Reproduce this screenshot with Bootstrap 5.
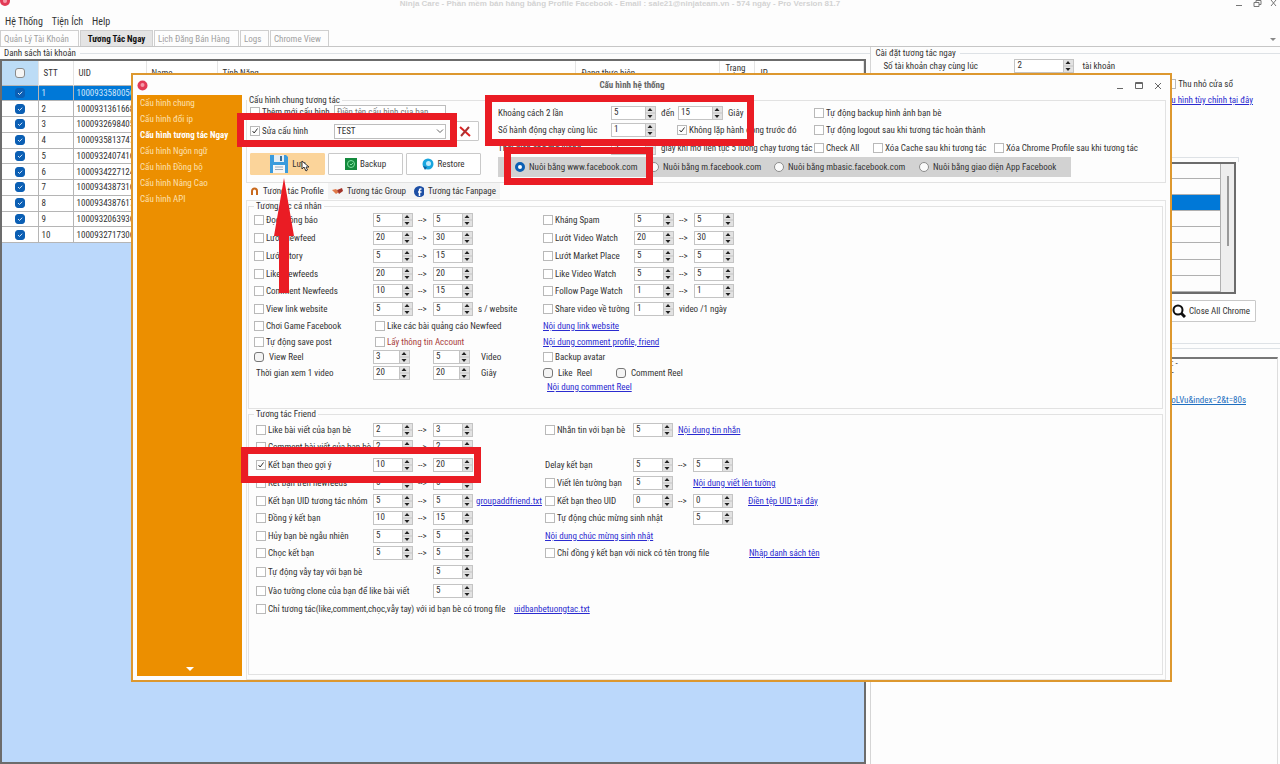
<!DOCTYPE html>
<html lang="vi">
<head>
<meta charset="utf-8">
<meta name="viewport" content="width=device-width, initial-scale=1">
<title>Ninja Care</title>
<link href="https://cdn.jsdelivr.net/npm/bootstrap@5.3.0/dist/css/bootstrap.min.css" rel="stylesheet">
<style>
body{font-family:"Roboto Condensed",Roboto,"Liberation Sans",sans-serif;font-size:9px;line-height:14px;color:#333;background:#fdfdfd;min-height:100vh;position:relative;overflow-x:hidden}
a{color:#2b2bd0}
/* main window */
.win-title{height:14px;font:bold 8px/8px "Liberation Sans",sans-serif;color:#d3d3d3;padding-right:40px}
.win-tools{position:absolute;right:0;top:0}
.win-logo{position:absolute;left:0;top:0}
.menu-row{height:16px;font-size:10px;padding-left:5px;gap:9px}
.menu-row a{color:#333;text-decoration:none}
.main-tabs{height:17px;border-bottom:1px solid #c6c6c6;gap:1px}
.main-tabs .nav-link{padding:0 3px;height:16px;line-height:16px;color:#a0a0a0;border:1px solid #cfcfcf;border-bottom:0;border-radius:0;background:#fdfdfd;text-align:left}
.main-tabs .nav-link.active{color:#111;font-weight:bold;background:#e4e4e4;text-align:center}
.tab-a{width:79px}.tab-b{width:73px}.tab-c{width:85px}.tab-d{width:29px}.tab-e{width:59px}
.pane-l{flex:1 1 0;min-width:0}
.pane-r{flex:0 0 32%;border-left:1px solid #d5d5d5}
.box-cap{height:12px}
.acc-box{border:2px solid #6c6c6c;background:#bbd8fb;overflow:hidden}
.acc{width:100%;height:182px;table-layout:fixed;background:#fff;border-collapse:collapse}
.acc th{font-weight:normal;height:24px;border-right:1px solid #e4e4e4;padding:0 5px;vertical-align:middle;line-height:10px}
.acc td{border:1px solid #b5b5b5;border-left:0;padding:0 3px;line-height:10px;white-space:nowrap;overflow:hidden}
.acc .pick{text-align:center;padding:0}
.acc th.pick{background:#bcdcf6}
.acc tr.on td{background:#0078d7;color:#cfe6fb}
.w-pick{width:36px}.w-stt{width:35px}.w-uid{width:73px}.w-name{width:71px}.w-act{width:144px}.w-ip{width:109px}
.blue-ck{appearance:none;width:10px;height:10px;border:1px solid #8a8a8a;border-radius:3px;background:#f5f5f5;margin:0;display:block;margin-inline:auto}
.blue-ck:checked{border-color:#0b5fb4;background:#0b5fb4 url("data:image/svg+xml,%3Csvg xmlns='http://www.w3.org/2000/svg' viewBox='0 0 8 8'%3E%3Cpath d='M2 4l1.5 1.5L6.200 2.700' fill='none' stroke='%23d8e8fa'/%3E%3C/svg%3E")}
/* group boxes */
fieldset{border:1px solid #e2e2e2}
legend{float:none;width:auto;margin:0;padding:0 2px;font-size:9px;line-height:10px}
/* controls */
.tick{display:inline-flex;align-items:center;gap:2px;white-space:nowrap}
.tick input[type=checkbox]{appearance:none;flex:none;width:10px;height:10px;border:1px solid #b9b9b9;background:#fff;margin:0}
.tick input[type=checkbox]:checked{background:url("data:image/svg+xml,%3Csvg xmlns='http://www.w3.org/2000/svg' viewBox='0 0 8 8'%3E%3Cpath d='M1.500 4l1.700 2L6.500 1.500' fill='none' stroke='%23333'/%3E%3C/svg%3E")}
.tick.round{gap:5px}
.tick.round input[type=checkbox]{border-color:#777;border-radius:3px;background:#f4f4f4}
.tick input[type=radio]{appearance:none;flex:none;width:10px;height:10px;border:1px solid #8c8c8c;border-radius:50%;background:#fafafa;margin:0}
.tick input[type=radio]:checked{border:3px solid #0b5fb4;background:#fff}
.spin{appearance:textfield;width:40px;height:14px;flex:none;border:1px solid #c4c4c4;border-radius:0;padding:0 12px 2px 2px;font-size:9px;line-height:10px;color:#333;
background:#fff url("data:image/svg+xml,%3Csvg xmlns='http://www.w3.org/2000/svg' width='10' height='12'%3E%3Cpath fill='%23e2e2e2' d='M0 0h10v12H0z'/%3E%3Cpath d='M0 6h10M.5 0v12' stroke='%23c4c4c4'/%3E%3Cpath fill='%23222' d='M5 1L7.500 4H2.500zM5 11L7.500 8H2.500z'/%3E%3C/svg%3E") right center no-repeat}
.spin::-webkit-inner-spin-button{appearance:none}
.spin.mid{width:45px}.spin.wide{width:60px}.spin.slim{width:37px}
.num{display:flex;align-items:center;gap:5px;white-space:nowrap}
/* settings dialog */
.dlg{position:absolute;left:131px;right:108px;top:73px;border:2px solid #dd982f;background:#fdfdfd}
.dlg-title{height:20px;font-weight:bold;color:#666;font-size:9px}
.dlg-side{width:105px;margin-left:4px;background:#ec8f00;padding:0 3px;margin-bottom:4px}
.dlg-side a{color:#fde0b0;text-decoration:none;height:16px;line-height:16px;white-space:nowrap}
.dlg-side a.active{color:#fff;font-weight:bold}
.dlg-body{margin-left:4px;margin-right:4px}
.cfg{padding:0 0 5px 3px}
.cfg-l{width:248px;flex:none}
.cfg-l .tick{width:84px}
.cfg-box{width:112px;height:15px;border:1px solid #bdbdbd;border-radius:0;padding:0 2px;font-size:9px;line-height:11px;background:#fff;color:#333}
select.cfg-box{appearance:none;background:#fff url("data:image/svg+xml,%3Csvg xmlns='http://www.w3.org/2000/svg' width='10' height='6'%3E%3Cpath d='M2 1.500l3 3 3-3' fill='none' stroke='%23666'/%3E%3C/svg%3E") right center no-repeat}
.btn-win{--bs-btn-padding-x:0;--bs-btn-padding-y:0;--bs-btn-font-size:9px;--bs-btn-border-radius:1px;--bs-btn-line-height:14px;--bs-btn-bg:#fff;--bs-btn-color:#333;--bs-btn-border-color:#c9c9c9;display:flex;align-items:center;justify-content:center;height:22px;width:75px;gap:3px}
.btn-del{width:29px;height:20px}
.btn-close-all{width:90px}
.btn-save{--bs-btn-bg:#fbd49a;--bs-btn-border-color:#fbd49a;position:relative}
.hand{position:absolute;left:50px;top:6px}
.run-row{display:grid;grid-template-columns:113px 203px 1fr;align-items:center}
.w-all{width:59px}.w-cache{width:121px}.w-reel{width:73px}
.modes{background:#d2d2d2;height:20px;padding-left:17px;margin-right:94px}
.modes .tick{gap:4px}
.m1{width:134px}.m2{width:125px}.m3{width:145px}
.act-tabs{height:17px}
.act-tabs .nav-link{display:flex;align-items:center;gap:4px;padding:0 4px;border:0;width:82px;color:#333;background:#f4f4f4;border-radius:0;height:16px;white-space:nowrap}
.act-tabs .nav-link.active{background:#fdfdfd;color:#333}
.act-tabs .nav-link:last-child{width:90px}
.act-pane{border:1px solid #e4e4e4;padding:0 2px 4px 1px}
.act-pane fieldset{padding-left:5px}
.acts{display:grid;align-items:center}
.acts>*{min-width:0;white-space:nowrap}
.acts-self{grid-template-columns:119px 60px 110px 91px 60px 1fr;grid-template-rows:18px 18px 18px 17px 18px 17px 17px 15px 15px 17px 12px;padding-bottom:15px}
.acts-friend{grid-template-columns:117px 60px 112px 88px 60px 1fr;grid-template-rows:17px 18px 18px 18px 17px 18px 17px 18px 20px 18px 18px;padding:2px 0 56px 2px}
.acts-friend .c3 a{margin-left:-2px}
.acts a{justify-self:start}
.c1{grid-column:1}.c2{grid-column:2}.c3{grid-column:3}.c4{grid-column:4}.c5{grid-column:5}.c6{grid-column:6}
.nudge{padding-left:2px}
.file-link{grid-column:3/5;padding-left:81px}
.name-link{padding-left:56px}
.danger{color:#a8403c}
/* right pane */
.cnt-lab{width:131px}
.r-small{padding-right:47px}
.r-link{padding-right:27px}
.r-edge{margin-top:50px;margin-right:41px}
.grid-box{height:132px;border:2px solid #6c6c6c;margin-right:44px;overflow:hidden}
.grid-lines{border-collapse:collapse;width:100%}
.grid-lines td{height:16px;padding:0;border-bottom:1px solid #b0b0b0;border-right:1px solid #b0b0b0}
.grid-lines tr:first-child td{height:14px}
.grid-lines tr.on td{background:#0078d7}
.scroll-col{width:13px;background:#eee}
.scroll-col span{width:2px;height:70px;margin:12px 0 0 6px;background:#999}
.r-actions{padding:6px 24px 21px 0}
.r-split{height:6px}
.log-box{border-top:2px solid #777;border-right:1px solid #ddd;margin-right:2px}
.log-lines{padding-left:300px;line-height:9px}
.log-link{padding:16px 31px 0 0}
.log-link a{color:#1f6fc0}
/* annotations drawn over the windows */
.note{position:absolute;border:7px solid #ea1c24;pointer-events:none}
.note-edit{left:237px;top:113px;width:220px;height:34px}
.note-run{left:485px;top:95px;width:269px;height:51px}
.note-mode{left:504px;top:147px;width:149px;height:38px}
.note-friend{left:241px;top:447px;width:240px;height:36px}
.note-arrow{position:absolute;left:273px;top:178px;pointer-events:none}
</style>
</head>
<body class="d-flex flex-column">
<svg class="win-logo" width="12" height="7" aria-hidden="true"><circle cx="5" cy="1" r="5" fill="#e23a56"/><circle cx="5" cy="1" r="2" fill="#f59aa9"/></svg>
<div class="win-title text-center">Ninja Care - Phần mềm bán hàng bằng Profile Facebook - Email : sale21@ninjateam.vn - 574 ngày - Pro Version 81.7</div>
<svg class="win-tools" width="50" height="10" fill="none" stroke="#777" aria-hidden="true"><path d="M6 5.500h6M24 2.500h5v4h-5zM26 2V.5h5v4h-2M41 0l5 6M46 0l-5 6"/></svg>
<nav class="menu-row d-flex align-items-center"><a href="#">Hệ Thống</a><a href="#">Tiện Ích</a><a href="#">Help</a></nav>
<div class="main-tabs nav d-flex flex-nowrap align-items-end">
  <button class="nav-link tab-a text-nowrap">Quản Lý Tài Khoản</button><button class="nav-link active tab-b text-nowrap">Tương Tác Ngay</button><button class="nav-link tab-c text-nowrap">Lịch Đăng Bán Hàng</button><button class="nav-link tab-d">Logs</button><button class="nav-link tab-e text-nowrap">Chrome View</button>
  <svg class="ms-auto me-1 mb-1" width="6" height="4" aria-hidden="true"><path d="M0 0h6L3 3z" fill="#888"/></svg>
</div>
<main class="d-flex flex-grow-1">
  <section class="pane-l d-flex flex-column">
    <div class="box-cap ps-1 d-flex align-items-center gap-1">Danh sách tài khoản<span class="border-top flex-grow-1"></span></div>
    <div class="acc-box flex-grow-1 me-1">
      <table class="acc">
        <colgroup><col class="w-pick"><col class="w-stt"><col class="w-uid"><col class="w-name"><col><col class="w-act"><col class="w-stt"><col class="w-ip"></colgroup>
        <thead><tr><th class="pick"><input type="checkbox" class="blue-ck" aria-label="Chọn tất cả"></th><th>STT</th><th>UID</th><th>Name</th><th>Tính Năng</th><th>Đang thực hiện</th><th>Trạng thái</th><th>IP</th></tr></thead>
        <tbody>
        <tr class="on"><td class="pick"><input type="checkbox" class="blue-ck" checked aria-label="1"></td><td>1</td><td>100093358005671</td><td></td><td></td><td></td><td></td><td></td></tr>
        <tr><td class="pick"><input type="checkbox" class="blue-ck" checked aria-label="2"></td><td>2</td><td>100093136166812</td><td></td><td></td><td></td><td></td><td></td></tr>
        <tr><td class="pick"><input type="checkbox" class="blue-ck" checked aria-label="3"></td><td>3</td><td>100093269840523</td><td></td><td></td><td></td><td></td><td></td></tr>
        <tr><td class="pick"><input type="checkbox" class="blue-ck" checked aria-label="4"></td><td>4</td><td>100093581374734</td><td></td><td></td><td></td><td></td><td></td></tr>
        <tr><td class="pick"><input type="checkbox" class="blue-ck" checked aria-label="5"></td><td>5</td><td>100093240741645</td><td></td><td></td><td></td><td></td><td></td></tr>
        <tr><td class="pick"><input type="checkbox" class="blue-ck" checked aria-label="6"></td><td>6</td><td>100093422712456</td><td></td><td></td><td></td><td></td><td></td></tr>
        <tr><td class="pick"><input type="checkbox" class="blue-ck" checked aria-label="7"></td><td>7</td><td>100093438731667</td><td></td><td></td><td></td><td></td><td></td></tr>
        <tr><td class="pick"><input type="checkbox" class="blue-ck" checked aria-label="8"></td><td>8</td><td>100093438761778</td><td></td><td></td><td></td><td></td><td></td></tr>
        <tr><td class="pick"><input type="checkbox" class="blue-ck" checked aria-label="9"></td><td>9</td><td>100093206393689</td><td></td><td></td><td></td><td></td><td></td></tr>
        <tr><td class="pick"><input type="checkbox" class="blue-ck" checked aria-label="10"></td><td>10</td><td>100093271730690</td><td></td><td></td><td></td><td></td><td></td></tr>
        </tbody>
      </table>
    </div>
  </section>
  <section class="pane-r d-flex flex-column">
    <div class="box-cap ps-1 d-flex align-items-center gap-1">Cài đặt tương tác ngay<span class="border-top flex-grow-1"></span></div>
    <div class="d-flex align-items-center ps-2">
      <label for="acc-count" class="ms-1 cnt-lab">Số tài khoản chạy cùng lúc</label><input id="acc-count" class="spin wide" type="number" value="2"><span class="ms-2">tài khoản</span></div>
    <div class="text-end mt-1 r-small"><label class="tick"><input type="checkbox"> Thu nhỏ cửa sổ</label></div>
    <div class="text-end r-link"><a href="#">Cấu hình tùy chỉnh tại đây</a></div>
    <div class="border-top border-end pt-1 r-edge"></div>
    <div class="grid-box d-flex">
      <table class="grid-lines"><tbody><tr><td></td></tr><tr><td></td></tr><tr class="on"><td></td></tr><tr><td></td></tr><tr><td></td></tr><tr><td></td></tr><tr><td></td></tr><tr><td></td></tr></tbody></table>
      <div class="scroll-col flex-shrink-0 d-flex"><span></span></div>
    </div>
    <div class="d-flex justify-content-end r-actions"><button class="btn btn-win btn-close-all"><svg width="14" height="14" fill="none" stroke="#111" stroke-width="2" aria-hidden="true"><circle cx="6" cy="6" r="4.500"/><path d="M9 9l4 4" stroke-width="3"/></svg>Close All Chrome</button></div>
    <div class="border-top border-bottom r-split"></div>
    <div class="log-box flex-grow-1 mt-2"><div class="d-flex flex-column log-lines"><span>: -</span><span>-</span></div><div class="text-end log-link"><a href="#">4aoLVu&amp;index=2&amp;t=80s</a></div></div>
  </section>
</main>

<div class="dlg">
  <div class="dlg-title d-flex align-items-center px-1">
    <svg width="11" height="11" aria-hidden="true"><circle cx="5.500" cy="5.500" r="5" fill="#e23a56"/><circle cx="5.500" cy="5" r="2" fill="#f59aa9"/></svg>
    <span class="flex-grow-1 text-center">Cấu hình hệ thống</span>
    <svg width="50" height="11" fill="none" stroke="#666" aria-hidden="true"><path d="M1 8.500h6M19.500 2.500h7v6h-7zM19 3.500h8M39 3l6 6M45 3l-6 6"/></svg>
  </div>
  <div class="d-flex">
    <nav class="dlg-side d-flex flex-column flex-shrink-0"><a href="#">Cấu hình chung</a><a href="#">Cấu hình đổi ip</a><a href="#" class="active">Cấu hình tương tác Ngay</a><a href="#">Cấu hình Ngôn ngữ</a><a href="#">Cấu hình Đồng bộ</a><a href="#">Cấu hình Nâng Cao</a><a href="#">Cấu hình API</a>
      <svg class="mt-auto mx-auto mb-1" width="8" height="6" aria-hidden="true"><path d="M0 1h8L4 5z" fill="#fff"/></svg></nav>
    <div class="dlg-body flex-grow-1">
      <fieldset>
        <legend>Cấu hình chung tương tác</legend>
        <div class="d-flex cfg">
          <div class="cfg-l">
            <div class="d-flex align-items-center" style="height:14px"><label class="tick"><input type="checkbox"> Thêm mới cấu hình</label><input class="cfg-box" type="text" placeholder="Điền tên cấu hình của bạn" aria-label="Tên cấu hình"></div>
            <div class="d-flex align-items-center" style="height:24px"><label class="tick"><input type="checkbox" checked> Sửa cấu hình</label><select class="cfg-box" aria-label="Cấu hình"><option>TEST</option></select><button class="btn btn-win btn-del ms-1" aria-label="Xóa"><svg width="12" height="11" fill="none" aria-hidden="true"><path d="M1 1l10 9" stroke="#d22" stroke-width="2"/><path d="M10 1L2 10" stroke="#a33" stroke-width="2"/></svg></button></div>
            <div class="d-flex" style="margin-top:10px;gap:3px">
              <button class="btn btn-win btn-save"><svg width="20" height="20" aria-hidden="true"><path d="M1 1h16l2 2v16H1z" fill="#3a9bdc"/><path d="M5 1h10v7H5z" fill="#e6eef4"/><path d="M11 2h2v5h-2z" fill="#3a6f99"/><path d="M4 11h12v8H4z" fill="#f7f7f7"/><path d="M6 13h8M6 15.500h8" stroke="#9ab"/></svg>Lưu<svg class="hand" width="9" height="12" aria-hidden="true"><path d="M1 1v8l2-2 2 4 1.500-1L5 7h3z" fill="#fff" stroke="#333"/></svg></button>
              <button class="btn btn-win"><svg width="12" height="12" aria-hidden="true"><path d="M0 0h12v12H0z" fill="#138a3d"/><circle cx="6" cy="6" r="3.500" fill="none" stroke="#7fe0a0"/><path d="M5 6l1 1 2-2" stroke="#7fe0a0" fill="none"/></svg>Backup</button>
              <button class="btn btn-win"><svg width="12" height="12" aria-hidden="true"><circle cx="6" cy="6" r="5.500" fill="#18a5de"/><circle cx="6.500" cy="5.500" r="2.500" fill="#bfeafc"/><path d="M1 8l4 1-2 3z" fill="#0a5f9e"/></svg>Restore</button>
            </div>
          </div>
          <div class="flex-grow-1">
            <div class="run-row" style="height:16px"><label for="gap-a">Khoảng cách 2 lần</label><span class="num"><input id="gap-a" class="spin mid" type="number" value="5"><span style="width:12px">đến</span><input class="spin mid" type="number" value="15" aria-label="đến"><span>Giây</span></span><label class="tick"><input type="checkbox"> Tự động backup hình ảnh bạn bè</label></div>
            <div class="run-row" style="height:18px"><label for="par">Số hành động chạy cùng lúc</label><span class="num"><input id="par" class="spin mid" type="number" value="1"><label class="tick ms-3"><input type="checkbox" checked> Không lặp hành động trước đó</label></span><label class="tick"><input type="checkbox"> Tự động logout sau khi tương tác hoàn thành</label></div>
            <div class="run-row" style="height:18px"><label for="wait">Thời gian chờ mở luồng</label><span class="num"><input id="wait" class="spin mid" type="number" value="5"><span>giây khi mở liên tục 5 luồng chạy tương tác</span></span><span class="d-flex"><label class="tick w-all"><input type="checkbox"> Check All</label><label class="tick w-cache"><input type="checkbox"> Xóa Cache sau khi tương tác</label><label class="tick"><input type="checkbox"> Xóa Chrome Profile sau khi tương tác</label></span></div>
            <div class="modes d-flex align-items-center"><label class="tick m1"><input type="radio" name="mode" checked> Nuôi bằng www.facebook.com</label><label class="tick m2"><input type="radio" name="mode"> Nuôi bằng m.facebook.com</label><label class="tick m3"><input type="radio" name="mode"> Nuôi bằng mbasic.facebook.com</label><label class="tick"><input type="radio" name="mode"> Nuôi bằng giao diện App Facebook</label></div>
          </div>
        </div>
      </fieldset>
      <div class="act-tabs nav flex-nowrap">
        <button class="nav-link active"><svg width="9" height="10" fill="none" aria-hidden="true"><path d="M2 9V5a2.500 2.500 0 0 1 5 0v4" stroke="#c9691c" stroke-width="2"/></svg>Tương tác Profile</button>
        <button class="nav-link"><svg width="11" height="8" aria-hidden="true"><path d="M0 3l4-1 3 3-3 2z" fill="#e07a4a"/><path d="M5 3l5-2 1 3-4 3z" fill="#a3342a"/></svg>Tương tác Group</button>
        <button class="nav-link"><svg width="11" height="11" aria-hidden="true"><circle cx="5.500" cy="5.500" r="5.500" fill="#1d4fa5"/><path d="M7.500 3H6.500q-1 0-1 1v6M4 6h3.500" stroke="#fff" fill="none" stroke-width="1.500"/></svg>Tương tác Fanpage</button>
      </div>
      <div class="act-pane">
        <fieldset>
          <legend>Tương tác cá nhân</legend>
          <div class="acts acts-self">
            <label class="tick c1"><input type="checkbox"> Đọc thông báo</label><span class="num c2"><input class="spin" type="number" value="5" aria-label="Đọc thông báo từ"> --&gt;</span><span class="num c3"><input class="spin" type="number" value="5" aria-label="Đọc thông báo đến"></span>
            <label class="tick c4"><input type="checkbox"> Kháng Spam</label><span class="num c5"><input class="spin" type="number" value="5" aria-label="Kháng Spam từ"> --&gt;</span><span class="num c6"><input class="spin" type="number" value="5" aria-label="Kháng Spam đến"></span>
            <label class="tick c1"><input type="checkbox"> Lướt Newfeed</label><span class="num c2"><input class="spin" type="number" value="20" aria-label="Lướt Newfeed từ"> --&gt;</span><span class="num c3"><input class="spin" type="number" value="30" aria-label="Lướt Newfeed đến"></span>
            <label class="tick c4"><input type="checkbox"> Lướt Video Watch</label><span class="num c5"><input class="spin" type="number" value="20" aria-label="Lướt Video từ"> --&gt;</span><span class="num c6"><input class="spin" type="number" value="30" aria-label="Lướt Video đến"></span>
            <label class="tick c1"><input type="checkbox"> Lướt Story</label><span class="num c2"><input class="spin" type="number" value="5" aria-label="Lướt Story từ"> --&gt;</span><span class="num c3"><input class="spin" type="number" value="15" aria-label="Lướt Story đến"></span>
            <label class="tick c4"><input type="checkbox"> Lướt Market Place</label><span class="num c5"><input class="spin" type="number" value="5" aria-label="Market từ"> --&gt;</span><span class="num c6"><input class="spin" type="number" value="5" aria-label="Market đến"></span>
            <label class="tick c1"><input type="checkbox"> Like Newfeeds</label><span class="num c2"><input class="spin" type="number" value="20" aria-label="Like từ"> --&gt;</span><span class="num c3"><input class="spin" type="number" value="20" aria-label="Like đến"></span>
            <label class="tick c4"><input type="checkbox"> Like Video Watch</label><span class="num c5"><input class="spin" type="number" value="5" aria-label="Like Video từ"> --&gt;</span><span class="num c6"><input class="spin" type="number" value="5" aria-label="Like Video đến"></span>
            <label class="tick c1"><input type="checkbox"> Comment Newfeeds</label><span class="num c2"><input class="spin" type="number" value="10" aria-label="Comment từ"> --&gt;</span><span class="num c3"><input class="spin" type="number" value="15" aria-label="Comment đến"></span>
            <label class="tick c4"><input type="checkbox"> Follow Page Watch</label><span class="num c5"><input class="spin" type="number" value="1" aria-label="Follow từ"> --&gt;</span><span class="num c6"><input class="spin" type="number" value="1" aria-label="Follow đến"></span>
            <label class="tick c1"><input type="checkbox"> View link website</label><span class="num c2"><input class="spin" type="number" value="5" aria-label="View link từ"> --&gt;</span><span class="num c3"><input class="spin" type="number" value="5" aria-label="View link đến"> s / website</span>
            <label class="tick c4"><input type="checkbox"> Share video về tường</label><span class="num c5"><input class="spin" type="number" value="1" aria-label="Share video"> video /1 ngày</span>
            <label class="tick c1"><input type="checkbox"> Chơi Game Facebook</label><label class="tick c2 nudge"><input type="checkbox"> Like các bài quảng cáo Newfeed</label><a class="c4" href="#">Nội dung link website</a>
            <label class="tick c1"><input type="checkbox"> Tự động save post</label><label class="tick c2 nudge danger"><input type="checkbox"> Lấy thông tin Account</label><a class="c4" href="#">Nội dung comment profile, friend</a>
            <label class="tick round c1"><input type="checkbox"> View Reel</label><span class="num c2"><input class="spin slim" type="number" value="3" aria-label="Reel từ"></span><span class="num c3"><input class="spin slim" type="number" value="5" aria-label="Reel đến"><span class="ms-1 nudge">Video</span></span><label class="tick c4"><input type="checkbox"> Backup avatar</label>
            <span class="c1 nudge">Thời gian xem 1 video</span><span class="num c2"><input class="spin slim" type="number" value="20" aria-label="Thời gian từ"></span><span class="num c3"><input class="spin slim" type="number" value="20" aria-label="Thời gian đến"><span class="ms-1 nudge">Giây</span></span><span class="c4 d-flex"><label class="tick round w-reel flex-shrink-0"><input type="checkbox"> Like &nbsp;Reel</label><label class="tick round"><input type="checkbox"> Comment Reel</label></span>
            <a class="c4 ms-1" href="#">Nội dung comment Reel</a>
          </div>
        </fieldset>
        <fieldset>
          <legend>Tương tác Friend</legend>
          <div class="acts acts-friend">
            <label class="tick c1"><input type="checkbox"> Like bài viết của bạn bè</label><span class="num c2"><input class="spin" type="number" value="2" aria-label="Like từ"> --&gt;</span><span class="num c3"><input class="spin" type="number" value="3" aria-label="Like đến"></span><label class="tick c4"><input type="checkbox"> Nhắn tin với bạn bè</label><span class="num c5"><input class="spin" type="number" value="5" aria-label="Nhắn tin"> <a href="#">Nội dung tin nhắn</a></span>
            <label class="tick c1"><input type="checkbox"> Comment bài viết của bạn bè</label><span class="num c2"><input class="spin" type="number" value="2" aria-label="Comment từ"> --&gt;</span><span class="num c3"><input class="spin" type="number" value="2" aria-label="Comment đến"></span>
            <label class="tick c1"><input type="checkbox" checked> Kết bạn theo gợi ý</label><span class="num c2"><input class="spin" type="number" value="10" aria-label="Gợi ý từ"> --&gt;</span><span class="num c3"><input class="spin" type="number" value="20" aria-label="Gợi ý đến"></span><span class="c4">Delay kết bạn</span><span class="num c5"><input class="spin" type="number" value="5" aria-label="Delay từ"> --&gt;</span><span class="num c6"><input class="spin" type="number" value="5" aria-label="Delay đến"></span>
            <label class="tick c1"><input type="checkbox"> Kết bạn trên newfeeds</label><span class="num c2"><input class="spin" type="number" value="5" aria-label="Newfeeds từ"> --&gt;</span><span class="num c3"><input class="spin" type="number" value="5" aria-label="Newfeeds đến"></span><label class="tick c4"><input type="checkbox"> Viết lên tường bạn</label><span class="num c5"><input class="spin" type="number" value="5" aria-label="Viết lên tường"></span><a class="c6" href="#">Nội dung viết lên tường</a>
            <label class="tick c1"><input type="checkbox"> Kết bạn UID tương tác nhóm</label><span class="num c2"><input class="spin" type="number" value="5" aria-label="UID nhóm từ"> --&gt;</span><span class="num c3"><input class="spin" type="number" value="5" aria-label="UID nhóm đến"><a href="#">groupaddfriend.txt</a></span><label class="tick c4"><input type="checkbox"> Kết bạn theo UID</label><span class="num c5"><input class="spin" type="number" value="0" aria-label="UID từ"> --&gt;</span><span class="num c6"><input class="spin" type="number" value="0" aria-label="UID đến"><a class="ms-2 nudge" href="#">Điền tệp UID tại đây</a></span>
            <label class="tick c1"><input type="checkbox"> Đồng ý kết bạn</label><span class="num c2"><input class="spin" type="number" value="10" aria-label="Đồng ý từ"> --&gt;</span><span class="num c3"><input class="spin" type="number" value="15" aria-label="Đồng ý đến"></span><label class="tick c4"><input type="checkbox"> Tự động chúc mừng sinh nhật</label><span class="num c6"><input class="spin" type="number" value="5" aria-label="Sinh nhật"></span>
            <label class="tick c1"><input type="checkbox"> Hủy bạn bè ngẫu nhiên</label><span class="num c2"><input class="spin" type="number" value="5" aria-label="Hủy từ"> --&gt;</span><span class="num c3"><input class="spin" type="number" value="5" aria-label="Hủy đến"></span><a class="c4" href="#">Nội dung chúc mừng sinh nhật</a>
            <label class="tick c1"><input type="checkbox"> Chọc kết bạn</label><span class="num c2"><input class="spin" type="number" value="5" aria-label="Chọc từ"> --&gt;</span><span class="num c3"><input class="spin" type="number" value="5" aria-label="Chọc đến"></span><label class="tick c4"><input type="checkbox"> Chỉ đồng ý kết bạn với nick có tên trong file</label><span class="c6 name-link"><a href="#">Nhập danh sách tên</a></span>
            <label class="tick c1"><input type="checkbox"> Tự động vẫy tay với bạn bè</label><span class="num c3"><input class="spin" type="number" value="5" aria-label="Vẫy tay"></span>
            <label class="tick c1"><input type="checkbox"> Vào tường clone của bạn để like bài viết</label><span class="num c3"><input class="spin" type="number" value="5" aria-label="Clone"></span>
            <label class="tick c1"><input type="checkbox"> Chỉ tương tác(like,comment,chọc,vẫy tay) với id bạn bè có trong file</label><span class="file-link"><a href="#">uidbanbetuongtac.txt</a></span>
          </div>
        </fieldset>
      </div>
    </div>
  </div>
</div>

<div class="note note-edit"></div>
<div class="note note-run"></div>
<div class="note note-mode"></div>
<div class="note note-friend"></div>
<svg class="note-arrow" width="22" height="116" aria-hidden="true"><path d="M11 0l10 58h-5v57H6V58H1z" fill="#ea1c24"/></svg>
<script src="https://cdn.jsdelivr.net/npm/bootstrap@5.3.0/dist/js/bootstrap.bundle.min.js"></script>
</body>
</html>
